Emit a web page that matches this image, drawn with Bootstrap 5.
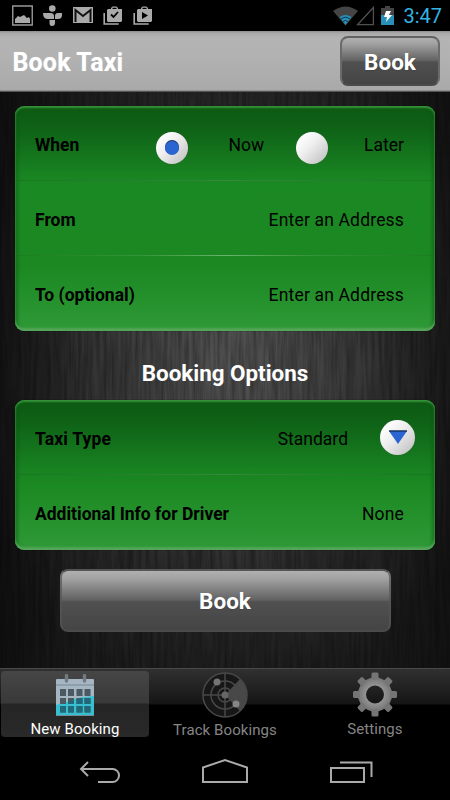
<!DOCTYPE html>
<html lang="en">
<head>
<meta charset="utf-8">
<meta name="viewport" content="width=device-width, initial-scale=1">
<title>Book Taxi</title>
<link rel="stylesheet" href="https://cdn.jsdelivr.net/npm/bootstrap@5.3.0/dist/css/bootstrap.min.css">
<style>
body{font-family:Roboto,"Liberation Sans",sans-serif;background:#000;line-height:1}
.screen{width:450px;height:800px}
svg{display:block;flex:none}
.status-bar{height:31px;padding:5px 8px 0 12px}
.status-icons{gap:9px}
.clock{color:#33b5e5;font-size:20px;line-height:23px;margin-left:8px}
.title-bar{height:61px;padding:5px 10px 0 12.5px;background:linear-gradient(#8c8c8c 0,#a9a9a9 2px,#b4b4b4 7px,#b2b2b2 25px,#a9a9a9 59px,#777 60px,#333 61px)}
.title-bar h1{font-size:25px;line-height:30px;margin-top:12px;letter-spacing:.15px;text-shadow:0 0 1px rgba(255,255,255,.4)}
.glossy,.glossy:hover{border:2px solid;border-color:#626262 #6a6a6a #4b4b4b;border-radius:8px;color:#fff;font-weight:700;font-size:22.5px;line-height:1;padding:2px 0 0;background:linear-gradient(#b4b4b4,#a2a2a2 15%,#626262 49%,#505050 52%,#444);background-clip:border-box;background-origin:border-box;text-shadow:0 1px 1px #444}
.book-top{width:100px;height:50px}
.book-main,.book-main:hover{width:331px;height:63px;margin:19px auto 0;border-color:#555 rgba(85,85,85,.7) #4b4b4b}
.metal{height:576px;padding:14px 15px 0;background:#191919}
.metal-texture{inset:0;width:100%;height:100%}
.panel{width:420px;border-radius:9px;font-size:17.5px;color:#000;overflow:hidden;box-shadow:0 0 1px #100010,inset 0 2px 2px #36933b,inset 0 -3px 2px #55a65a,inset 3px 0 3px rgba(8,90,16,.5),inset -3px 0 3px rgba(8,90,16,.5)}
.panel-three{background:linear-gradient(#0d5813 0,#0f6417 25px,#188121 66px,#1b8923 78px,#1b8822 160px,#2d9835 220px)}
.panel-two{background:linear-gradient(#0d5813 0,#0f6417 25px,#188121 68px,#1b8922 85px,#2d9835 145px)}
.field{height:74px;padding:3px 31px 0 20px}
.field:last-child{height:76px;padding-top:3px}
.panel-three .field:nth-child(2){height:75px;padding-top:4px}
.panel-three .field:last-child{padding-top:3px}
.field+.field{background:linear-gradient(90deg,rgba(20,90,25,.2) 0,rgba(80,160,80,.5) 30%,#68b46d 50%,rgba(80,160,80,.5) 70%,rgba(20,90,25,.2) 100%) 3px 0/414px 1px no-repeat}
.panel .field:nth-child(2){background-image:linear-gradient(90deg,rgba(20,90,25,.3),#34883b 50%,rgba(20,90,25,.3))}
.field span{line-height:22px;white-space:nowrap}
.field .answer{letter-spacing:.17px}
.dot{width:32px;height:32px;border-radius:50%;background:linear-gradient(135deg,#fff 15%,#eee 45%,#bbb);margin-top:6px;box-shadow:0 0 1px #555}
.dot-on::after{content:"";width:14px;height:14px;border-radius:50%;background:#2b65d2;box-shadow:0 -1px 0 #173461}
.pick{width:35px;height:35px;margin:-3px -11px 0 32px}
.section-title{height:69px;font-size:22.4px;padding-top:30px;line-height:24px}
.tabs{height:72px;border-top:1px solid #494949;background:linear-gradient(#303030,#151515 35px,#000 36px)}
.tab-cell{width:150px;height:71px;font-size:15px;letter-spacing:.08px;color:#858585;padding-top:3px}
.tab-cell.selected{width:148px;height:66px;margin:2px 1px 0;padding-top:2px;border-radius:4px;color:#fff;background:linear-gradient(#464646,#393939 32px,#252525 33px,#292929)}
.tab-cell span{line-height:16px;margin-top:4px}
.tab-cell.selected span{margin-top:3px}
.soft-keys{height:60px}
</style>
<script src="https://cdn.jsdelivr.net/npm/bootstrap@5.3.0/dist/js/bootstrap.bundle.min.js"></script>
</head>
<body>
<div class="screen d-flex flex-column overflow-hidden">
  <div class="status-bar d-flex align-items-start justify-content-between">
    <div class="status-icons d-flex">
      <svg width="21" height="21" viewBox="0 0 21 21"><path d="M.75 1h19.5v19H.75z" fill="none" stroke="#999" stroke-width="1.4"/><path d="M3 18v-4l3-3 2 1 4-2 3 3 2-1 1 2v4z" fill="#aaa"/></svg>
      <svg width="21" height="22" viewBox="0 0 21 22" fill="#aaa"><circle cx="10.300" cy="3.500" r="3.300"/><path d="M1 8h7.500q3.500 0 3.500 3v3H6Q1 14 1 8zM13 14v-3q0-3 3-3h4v2q0 4-4 4zM7.500 15H13v3q0 3-3 3-2.500 0-2.500-3z"/></svg>
      <svg width="22" height="21" viewBox="0 0 22 21"><path d="M1 2h20v16H1z" fill="#aaa"/><path d="M3.500 17V5L11 11 18.500 5v12" fill="none" stroke="#111" stroke-width="2"/></svg>
      <svg width="20" height="22" viewBox="0 0 20 22"><path d="M1.200 8v11h14.500" fill="none" stroke="#aaa" stroke-width="1.600"/><path d="M5 4h3V3l1.500-1.500h4L15 3v1h4v12l-1 1H5l-1-1V5zM9.500 4h4V2.800h-4z" fill="#aaa" fill-rule="evenodd"/><path d="M8 9.500l2.500 2.500 4.500-5" fill="none" stroke="#000" stroke-width="1.800"/></svg>
      <svg width="20" height="22" viewBox="0 0 20 22"><path d="M2.200 8v11h14.500" fill="none" stroke="#aaa" stroke-width="1.600"/><path d="M6 4h3V3l1.500-1.500h4L16 3v1h4v12l-1 1H6l-1-1V5zM10.500 4h4V2.800h-4z" fill="#aaa" fill-rule="evenodd"/><path d="M10 7l6 3.500-6 3.500z" fill="#000"/></svg>
    </div>
    <div class="d-flex">
      <svg width="63" height="22" viewBox="0 0 63 22"><path d="M1 6Q13.500-3 26 6L13.500 20.500z" fill="#444"/><path d="M7.500 12Q13.500 8 19.500 12L13.500 20z" fill="#278fb8"/><path d="M9 14q4.500-3.500 9 0M11 16.500q2.500-2 5 0" fill="none" stroke="#092b38" stroke-width=".9"/><path d="M25.500 19.700L41.400 2.500v17.200z" fill="none" stroke="#505050" stroke-width="1.300"/><path d="M49 3h4V1h5v2h4v17H49z" fill="#444"/><path d="M49 10h13v10H49z" fill="#278fb8"/><path d="M54 6h5l-2 4h3l-6 7 1-5h-3z" fill="#fff"/></svg>
      <span class="clock">3:47</span>
    </div>
  </div>

  <header class="title-bar d-flex justify-content-between align-items-start">
    <h1 class="fw-bold text-white mb-0">Book Taxi</h1>
    <button class="btn glossy book-top" type="button">Book</button>
  </header>

  <main class="metal position-relative">
    <svg class="metal-texture position-absolute" aria-hidden="true">
      <defs>
        <radialGradient id="sheen" cx=".52" cy=".46" r=".6"><stop offset="0" stop-color="#545454"/><stop offset=".3" stop-color="#434343"/><stop offset=".65" stop-color="#2b2b2b"/><stop offset="1" stop-color="#1b1b1b"/></radialGradient>
        <linearGradient id="edgeShade"><stop offset="0" stop-color="#000" stop-opacity=".4"/><stop offset=".18" stop-color="#000" stop-opacity="0"/><stop offset=".82" stop-color="#000" stop-opacity="0"/><stop offset="1" stop-color="#000" stop-opacity=".3"/></linearGradient>
        <filter id="brush" x="0" y="0" width="100%" height="100%" color-interpolation-filters="sRGB"><feTurbulence type="fractalNoise" baseFrequency=".28 .016" numOctaves="3" seed="7"/><feColorMatrix values="0 0 0 0 0  0 0 0 0 0  0 0 0 0 0  .6 0 0 0 -.17"/></filter>
      </defs>
      <rect width="450" height="576" fill="url(#sheen)"/>
      <rect width="450" height="576" filter="url(#brush)"/>
      <rect width="450" height="576" fill="url(#edgeShade)"/>
    </svg>
    <div class="position-relative">
      <section class="panel panel-three">
        <div class="field d-flex align-items-center">
          <span class="fw-bold me-auto">When</span>
          <i class="dot dot-on d-flex align-items-center justify-content-center"></i>
          <span style="margin-left:40px">Now</span>
          <i class="dot" style="margin-left:32px"></i>
          <span style="margin-left:36px">Later</span>
        </div>
        <div class="field d-flex align-items-center justify-content-between"><span class="fw-bold">From</span><span class="answer">Enter an Address</span></div>
        <div class="field d-flex align-items-center justify-content-between"><span class="fw-bold">To (optional)</span><span class="answer">Enter an Address</span></div>
      </section>
      <h2 class="section-title text-white text-center fw-bold mb-0">Booking Options</h2>
      <section class="panel panel-two">
        <div class="field d-flex align-items-center"><span class="fw-bold answer me-auto">Taxi Type</span><span>Standard</span>
          <i class="dot pick d-flex align-items-center justify-content-center"><svg width="20" height="16" viewBox="0 0 20 16"><path d="M1 2h18l-9 13z" fill="#2b65d2"/><path d="M1 2h18" stroke="#173461" stroke-width="1.500"/></svg></i>
        </div>
        <div class="field d-flex align-items-center justify-content-between"><span class="fw-bold">Additional Info for Driver</span><span class="answer">None</span></div>
      </section>
      <button class="btn glossy book-main d-block" type="button">Book</button>
    </div>
  </main>

  <nav class="tabs d-flex">
    <div class="tab-cell selected d-flex flex-column align-items-center">
      <svg width="40" height="45" viewBox="0 0 40 45"><path d="M1 7q0-1 1-1h36q1 0 1 1v36H1z" fill="#a5b6c2"/><path d="M1 32Q10 30 17 27t22-4v20H1z" fill="#36bed1"/><path d="M1 12h38M1 42.500h38" stroke="#778a96"/><g fill="#4b5961"><path d="M5 16h6v7H5zM13 16h6v7h-6zM21.500 16h6v7h-6zM29.500 16h6v7h-6zM5 25h6v6H5zM13 25h6v6h-6zM21.500 25h6v6h-6zM29.500 25h6v6h-6zM5 33h6v6.500H5zM13 33h6v6.500h-6zM21.500 33h6v6.500h-6zM29.500 33h6v6.500h-6z"/></g><path d="M13 28.800l6-2V31h-6zM21.500 25.500l6-.5v6h-6zM29.500 25h6v6h-6zM5 33h6v6.500H5zM13 33h6v6.500h-6zM21.500 33h6v6.500h-6zM29.500 33h6v6.500h-6z" fill="#216978"/><path d="M11.500 2.500v5.500M29.500 2.500v5.500" stroke="#737a80" stroke-width="3.400" stroke-linecap="round"/></svg>
      <span>New Booking</span>
    </div>
    <div class="tab-cell d-flex flex-column align-items-center">
      <svg width="46" height="46" viewBox="0 0 46 46"><circle cx="23" cy="23" r="22" fill="#171717"/><path d="M23 23L38 7a22 22 0 0 1 0 32z" fill="#484848"/><g fill="none" stroke="#484848" stroke-width="1.500"><circle cx="23" cy="23" r="22"/><circle cx="23" cy="23" r="14"/><circle cx="23" cy="23" r="7"/><path d="M23 1v44M1 23h44"/></g><circle cx="23" cy="23" r="3.500" fill="#666"/><circle cx="15" cy="10" r="3.500" fill="#737373"/><circle cx="34" cy="32" r="3.500" fill="#858585"/></svg>
      <span>Track Bookings</span>
    </div>
    <div class="tab-cell d-flex flex-column align-items-center">
      <svg width="46" height="45" viewBox="-23 -22.500 46 45"><defs><radialGradient id="steel" gradientUnits="userSpaceOnUse" cx="0" cy="0" r="22"><stop offset=".4" stop-color="#949494"/><stop offset="1" stop-color="#636363"/></radialGradient><path id="tooth" d="M-5.500-15L-3.500-17v-3.500Q-3.500-22-2-22h4q1.500 0 1.500 1.500v3.500l2 2z"/></defs><path d="M0-17a17 17 0 1 1 0 34a17 17 0 1 1 0-34zM0-9a9 9 0 1 0 0 18a9 9 0 1 0 0-18z" fill="url(#steel)"/><g fill="#757575"><use href="#tooth"/><use href="#tooth" transform="rotate(45)"/><use href="#tooth" transform="rotate(90)"/><use href="#tooth" transform="rotate(135)"/><use href="#tooth" transform="rotate(180)"/><use href="#tooth" transform="rotate(225)"/><use href="#tooth" transform="rotate(270)"/><use href="#tooth" transform="rotate(315)"/></g></svg>
      <span>Settings</span>
    </div>
  </nav>

  <div class="soft-keys">
    <svg width="450" height="60" viewBox="0 0 450 60" fill="none" stroke="#aaa" stroke-width="2"><path d="M88 22l-7 7 7 7M81 29h31.500a6.500 6.500 0 0 1 0 13H98"/><path d="M203 42V27.500L225 20l22 7.500V42z"/><path d="M331 28h33v14h-33zM340 22.500h31.500V37"/></svg>
  </div>
</div>
</body>
</html>
